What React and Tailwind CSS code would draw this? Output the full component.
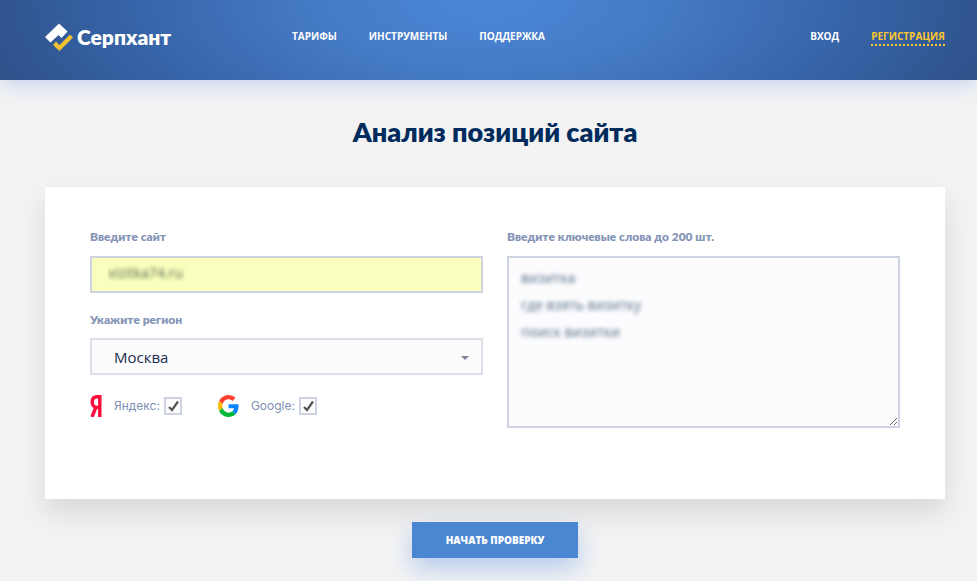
import React, { useState } from "react";

const navLinks = ["Тарифы", "Инструменты", "Поддержка"];

function LogoMark() {
    return (
        <svg width="28" height="28" viewBox="0 0 28 28" aria-hidden="true">
            <path d="M0 14L14 0.5L22.5 8.5L16.5 15L13.5 12L5.5 19.5Z" fill="#fff" />
            <path d="M8 22L11 18.5L14.5 22L25 11.5L28 14.5L14.5 28Z" fill="#f0c233" />
        </svg>
    );
}

function YandexIcon() {
    return (
        <svg width="12" height="22" viewBox="0 0 12 22" fill="none" stroke="#fc0d3b" aria-hidden="true">
            <path d="M9.8 22V1.7H7C4 1.7 2.2 3.6 2.2 7C2.2 10.4 4 12.4 7 12.4H10" strokeWidth="3.4" />
            <path d="M6 12L2 22" strokeWidth="3.4" />
        </svg>
    );
}

function GoogleIcon() {
    return (
        <svg width="21" height="22" viewBox="0 0 48 48" preserveAspectRatio="none" aria-hidden="true">
            <path fill="#ff4131" d="M24 9.5c3.5 0 6.7 1.2 9.2 3.6l6.9-6.9C35.9 2.4 30.5 0 24 0 14.6 0 6.5 5.4 2.6 13.2l8 6.2C12.4 13.7 17.7 9.5 24 9.5z" />
            <path fill="#0a85ff" d="M47 24.6c0-1.6-.2-3.1-.4-4.6H24v9h12.9c-.6 3-2.3 5.5-4.8 7.2l7.7 6C44.4 38 47 31.8 47 24.6z" />
            <path fill="#ffba00" d="M10.5 28.6c-.5-1.5-.8-3-.8-4.6s.3-3.1.8-4.6l-8-6.2C.9 16.5 0 20.1 0 24s.9 7.5 2.6 10.8z" />
            <path fill="#00b83a" d="M24 48c6.5 0 11.9-2.1 15.9-5.8l-7.7-6c-2.2 1.5-4.9 2.3-8.2 2.3-6.3 0-11.6-4.2-13.5-9.9l-8 6.2C6.5 42.6 14.6 48 24 48z" />
        </svg>
    );
}

function EngineCheckbox({ id, label, icon, checked, onChange }) {
    return (
        <div className="flex items-center">
            {icon}
            <label htmlFor={id} className="ml-3 font-[Inter,sans-serif] text-xs text-[#8090b3]">
                {label}
            </label>
            <span className="relative ml-1 h-[18px] w-[18px]">
                <input
                    id={id}
                    type="checkbox"
                    checked={checked}
                    onChange={onChange}
                    className="block h-full w-full appearance-none border-2 border-[#ced3e1] bg-[#fcfcfe]"
                />
                {checked && (
                    <svg viewBox="0 0 18 18" className="pointer-events-none absolute inset-0" fill="none" stroke="#555" strokeWidth="2.2">
                        <path d="M5 10L8 13L14 4.5" />
                    </svg>
                )}
            </span>
        </div>
    );
}

export default function App() {
    const [site, setSite] = useState("vizitka74.ru");
    const [region, setRegion] = useState("Москва");
    const [keywords, setKeywords] = useState("визитка\nгде взять визитку\nпоиск визитки");
    const [engines, setEngines] = useState({ yandex: true, google: true });

    const toggleEngine = (name) => {
        setEngines({ ...engines, [name]: !engines[name] });
    };

    return (
        <div className="min-h-screen overflow-hidden bg-[#f3f3f3] font-['Open_Sans',sans-serif]">
            <header className="flex h-20 items-center bg-[radial-gradient(ellipse_54%_280%_at_50%_0%,#4a86d6_0%,#467cc8_30%,#3663a6_70%,#2f5189_100%)] pr-8 pb-1.5 pl-[45px] text-[10px] font-bold text-white uppercase shadow-[0_4px_20px_#c3d3ee]">
                <a href="#" className="flex w-[247px] items-center gap-1 font-[Lato,sans-serif] text-[21px] font-extrabold normal-case">
                    <LogoMark />
                    Серпхант
                </a>
                <nav className="flex gap-8 pb-0.5">
                    {navLinks.map((link) => (
                        <a key={link} href="#">
                            {link}
                        </a>
                    ))}
                </nav>
                <div className="ml-auto flex gap-8 pb-0.5">
                    <a href="#">Вход</a>
                    <a href="#" className="-mb-0.5 border-b-2 border-dotted border-[#fdc72f] text-[#fdc72f]">
                        Регистрация
                    </a>
                </div>
            </header>

            <main className="pr-8 pb-6 pl-[45px]">
                <h1 className="pt-8 pb-[35px] text-center font-[Lato,sans-serif] text-[27px] leading-10 font-extrabold text-[#002b5c]">
                    Анализ позиций сайта
                </h1>

                <form onSubmit={(e) => e.preventDefault()}>
                    <div className="grid grid-cols-2 gap-6 bg-white px-[45px] pt-10 pb-[71px] shadow-[0_14px_26px_#d8d8d8]">
                        <div>
                            <label htmlFor="site" className="block font-[Lato,sans-serif] text-xs leading-5 font-extrabold text-[#8595b7]">
                                Введите сайт
                            </label>
                            <input
                                id="site"
                                type="text"
                                value={site}
                                onChange={(e) => setSite(e.target.value)}
                                className="mt-[9px] block h-[37px] w-full border-2 border-[#ced3e1] bg-[#faffbd] px-4 pb-1 text-sm text-transparent [text-shadow:0_0_4px_#54604f]"
                            />

                            <label htmlFor="region" className="mt-[17px] block font-[Lato,sans-serif] text-xs leading-5 font-extrabold text-[#8595b7]">
                                Укажите регион
                            </label>
                            <div className="relative mt-2">
                                <select
                                    id="region"
                                    value={region}
                                    onChange={(e) => setRegion(e.target.value)}
                                    className="block h-[37px] w-full appearance-none border-2 border-[#dde0e8] bg-[#fcfcfc] px-[22px] pt-0.5 text-[15px] text-[#1d2a52]"
                                >
                                    <option>Москва</option>
                                </select>
                                <svg width="8" height="4" viewBox="0 0 8 4" className="pointer-events-none absolute top-[18px] right-3.5">
                                    <path d="M0 0H8L4 4Z" fill="#7c8598" />
                                </svg>
                            </div>

                            <div className="mt-5 flex gap-9">
                                <EngineCheckbox
                                    id="yandex"
                                    label="Яндекс:"
                                    icon={<YandexIcon />}
                                    checked={engines.yandex}
                                    onChange={() => toggleEngine("yandex")}
                                />
                                <EngineCheckbox
                                    id="google"
                                    label="Google:"
                                    icon={<GoogleIcon />}
                                    checked={engines.google}
                                    onChange={() => toggleEngine("google")}
                                />
                            </div>
                        </div>

                        <div>
                            <label htmlFor="keywords" className="block font-[Lato,sans-serif] text-xs leading-5 font-extrabold text-[#8595b7]">
                                Введите ключевые слова до 200 шт.
                            </label>
                            <textarea
                                id="keywords"
                                value={keywords}
                                onChange={(e) => setKeywords(e.target.value)}
                                className="mt-[9px] block h-[172px] w-full resize border-2 border-[#ced3e1] bg-[#fcfcfe] px-3 py-1.5 text-sm leading-[27px] text-transparent [text-shadow:0_0_4px_#526a80]"
                            />
                        </div>
                    </div>

                    <button
                        type="submit"
                        className="mx-auto mt-[23px] block h-9 bg-[#4b86d3] px-[34px] text-[10px] font-extrabold text-white uppercase shadow-[0_10px_24px_#b4caec]"
                    >
                        Начать проверку
                    </button>
                </form>
            </main>
        </div>
    );
}
